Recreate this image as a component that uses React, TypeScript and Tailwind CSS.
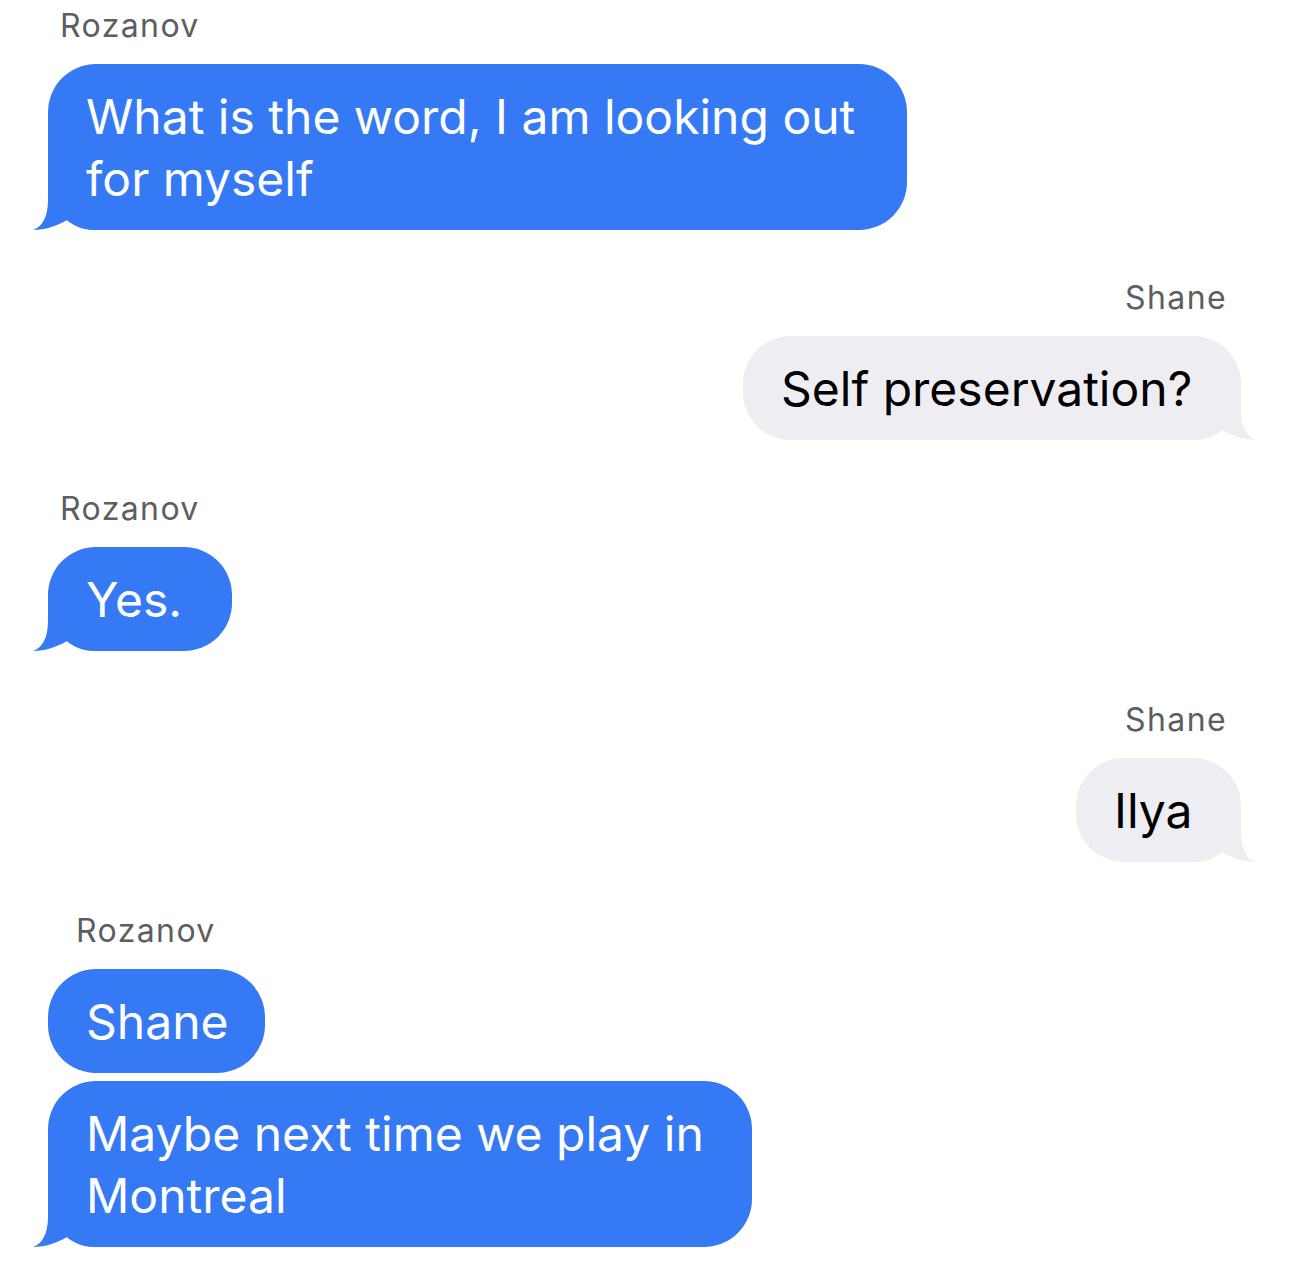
const BLUE = '#3679f4'
const GRAY = '#eeeef2'

type Msg = {
  from: 'them' | 'me'
  label?: string
  indent?: boolean
  lines: string[]
  width: string
  tail: boolean
  gap: string
}

function Tail({ side, color }: { side: 'left' | 'right'; color: string }) {
  return (
    <svg
      viewBox="-15 -60 63 60"
      className={
        side === 'left'
          ? 'absolute bottom-0 left-[-15px] h-[60px] w-[63px]'
          : 'absolute bottom-0 right-[-15px] h-[60px] w-[63px] -scale-x-100'
      }
    >
      <path
        d="M0 -60 L0 -30 C0 -13 -6 -3 -15 0 C-3 0 9 -4 19 -10 C26 -4 34 0 48 0 L48 -60 Z"
        fill={color}
      />
    </svg>
  )
}

function Bubble({ msg }: { msg: Msg }) {
  const mine = msg.from === 'me'
  return (
    <div className={`relative ${msg.width} ${mine ? 'self-end' : 'self-start'}`}>
      {msg.tail && <Tail side={mine ? 'right' : 'left'} color={mine ? GRAY : BLUE} />}
      <div
        className={`relative rounded-[48px] pl-[38px] pt-[22px] pb-[20px] text-[48px] leading-[62px] whitespace-nowrap ${
          mine ? 'bg-[#eeeef2] text-black' : 'bg-[#3679f4] text-white'
        }`}
      >
        {msg.lines.map((l, i) => (
          <div key={i}>{l}</div>
        ))}
      </div>
    </div>
  )
}

const MESSAGES: Msg[] = [
  {
    from: 'them',
    label: 'Rozanov',
    lines: ['What is the word, I am looking out', 'for myself'],
    width: 'w-[859px]',
    tail: true,
    gap: 'mt-[8px]',
  },
  {
    from: 'me',
    label: 'Shane',
    lines: ['Self preservation?'],
    width: 'w-[498px]',
    tail: true,
    gap: 'mt-[50px]',
  },
  {
    from: 'them',
    label: 'Rozanov',
    lines: ['Yes.'],
    width: 'w-[184px]',
    tail: true,
    gap: 'mt-[51px]',
  },
  {
    from: 'me',
    label: 'Shane',
    lines: ['Ilya'],
    width: 'w-[165px]',
    tail: true,
    gap: 'mt-[51px]',
  },
  {
    from: 'them',
    label: 'Rozanov',
    indent: true,
    lines: ['Shane'],
    width: 'w-[217px]',
    tail: false,
    gap: 'mt-[51px]',
  },
  {
    from: 'them',
    lines: ['Maybe next time we play in', 'Montreal'],
    width: 'w-[704px]',
    tail: true,
    gap: 'mt-[8px]',
  },
]

export default function App() {
  return (
    <div
      className="flex h-[1281px] w-[1290px] flex-col overflow-hidden bg-white pl-[48px] pr-[49px]"
      style={{ fontFamily: 'Inter, "Noto Sans", sans-serif' }}
    >
      {MESSAGES.map((m, i) => (
        <div key={i} className={`flex flex-col ${m.gap}`}>
          {m.label && (
            <div
              className={`mb-[20px] h-[36px] text-[32px] leading-[36px] tracking-[1.4px] text-[#5d5d62] ${
                m.from === 'me' ? 'self-end pr-[14px]' : m.indent ? 'self-start pl-[28px]' : 'self-start pl-[12px]'
              }`}
            >
              {m.label}
            </div>
          )}
          <Bubble msg={m} />
        </div>
      ))}
    </div>
  )
}
